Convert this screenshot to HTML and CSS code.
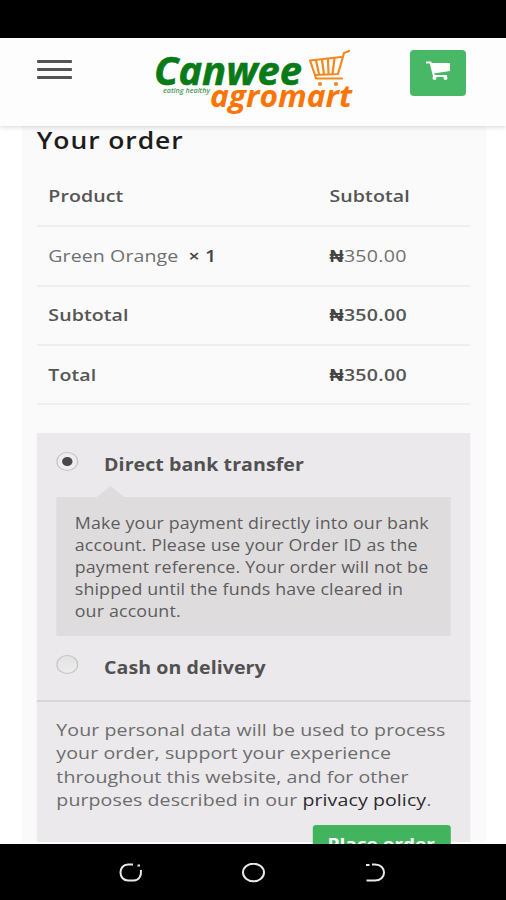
FILE: index.html
```html
<!DOCTYPE html>
<html lang="en">
<head>
    <meta charset="UTF-8">
    <meta name="viewport" content="width=device-width, initial-scale=1.0">
    <title>Checkout - Canwee agromart</title>
    <link rel="stylesheet" href="styles.css">
</head>
<body>
    <div class="status-bar"></div>

    <header class="header">
        <div class="menu">
            <span></span>
            <span></span>
            <span></span>
        </div>
        <svg class="logo" width="200" height="70" viewBox="0 0 200 70">
            <text class="logo-main" x="0" y="35" textLength="148" lengthAdjust="spacingAndGlyphs">Canwee</text>
            <text class="logo-tag" x="9" y="43" textLength="47" lengthAdjust="spacingAndGlyphs">eating healthy</text>
            <text class="logo-sub" x="56" y="56.500" textLength="142" lengthAdjust="spacingAndGlyphs">agromart</text>
            <g class="logo-cart">
                <path d="M195 1 L190 3 L184 24 L161 25 L156 10.500 L187 7" />
                <path d="M161 25 L162 28.500 H188" />
                <path d="M162 10.500 L165 24 M168 10 L170 24 M174 9 L174.500 24 M180.500 8.500 L178.500 24" />
                <circle cx="166" cy="34" r="1" />
                <circle cx="182" cy="34" r="1" />
            </g>
        </svg>
        <a class="cart-btn">
            <svg width="26" height="20" viewBox="0 0 26 20">
                <path d="M1 1.500 H5.500 L9 15 H22" />
                <path class="fill" d="M5.500 2 H25 V10 L8.500 12.500 Z" />
                <circle class="fill" cx="9.500" cy="17" r="2" />
                <circle class="fill" cx="20.500" cy="17" r="2" />
            </svg>
        </a>
    </header>

    <main class="content">
        <div class="order">
            <h3>Your order</h3>
            <table class="order-table">
                <tr>
                    <th>Product</th>
                    <th>Subtotal</th>
                </tr>
                <tr>
                    <td>Green Orange&nbsp; <b>× 1</b></td>
                    <td><b>₦</b>350.00</td>
                </tr>
                <tr>
                    <th>Subtotal</th>
                    <th><b>₦</b>350.00</th>
                </tr>
                <tr>
                    <th>Total</th>
                    <th><b>₦</b>350.00</th>
                </tr>
            </table>

            <div class="payment">
                <div class="methods">
                    <div class="method">
                        <span class="radio checked"></span>
                        <label>Direct bank transfer</label>
                    </div>
                    <div class="payment-box">
                        Make your payment directly into our bank<br>
                        account. Please use your Order ID as the<br>
                        payment reference. Your order will not be<br>
                        shipped until the funds have cleared in<br>
                        our account.
                    </div>
                    <div class="method">
                        <span class="radio"></span>
                        <label>Cash on delivery</label>
                    </div>
                </div>
                <div class="place-order">
                    <p>
                        Your personal data will be used to process<br>
                        your order, support your experience<br>
                        throughout this website, and for other<br>
                        purposes described in our <a>privacy policy</a>.
                    </p>
                    <div class="btn">Place order</div>
                </div>
            </div>
        </div>
    </main>

    <nav class="nav-bar">
        <svg width="24" height="20" viewBox="0 0 24 20">
            <path d="M14 1.500 H9 C-1 1.500 -1 17.500 9 17.500 H14.500 C20 17.500 22.500 13 22 7" />
            <path d="M18.500 2.500 H21" />
        </svg>
        <svg width="24" height="20" viewBox="0 0 24 20">
            <ellipse cx="12.500" cy="9.500" rx="10.500" ry="8.800" />
        </svg>
        <svg width="24" height="20" viewBox="0 0 24 20">
            <path d="M9 1.500 H12 C24 1.500 24 17.500 12 17.500 H3.500" />
            <path d="M3 2 H6.500" />
        </svg>
    </nav>
</body>
</html>
```
FILE: styles.css
```css
* {
    box-sizing: border-box;
}
body {
    margin: 0;
    width: 506px;
    height: 900px;
    display: flex;
    flex-direction: column;
    overflow: hidden;
    background: white;
    font-family: "Open Sans", sans-serif;
    color: #6d6d6d;
}
.status-bar {
    height: 38px;
    flex: none;
    background: black;
}
.header {
    height: 88px;
    flex: none;
    display: flex;
    align-items: flex-start;
    justify-content: space-between;
    padding: 12px 40px 0 37px;
    background: #fdfdfd;
    box-shadow: 0 1px 5px rgba(0,0,0,0.16);
    z-index: 1;
}
.menu {
    width: 35px;
    display: flex;
    flex-direction: column;
    gap: 5px;
    padding-top: 10px;
}
.menu span {
    height: 3px;
    border-radius: 1px;
    background: #555;
}
.logo {
    margin-left: 25px;
    overflow: visible;
}
.logo text {
    font-family: "Open Sans", sans-serif;
    font-style: italic;
    font-weight: bold;
}
.logo .logo-main {
    font-size: 40px;
    fill: #087a16;
    stroke: #087a16;
    stroke-width: 0.6;
}
.logo .logo-sub {
    font-size: 31px;
    fill: #fb7404;
}
.logo .logo-tag {
    font-size: 6.500px;
    font-weight: 600;
    fill: #4b9a58;
}
.logo-cart {
    fill: none;
    stroke: #f28a22;
    stroke-width: 2.2;
    stroke-linecap: round;
    stroke-linejoin: round;
}
.cart-btn {
    width: 56px;
    height: 46px;
    display: flex;
    align-items: center;
    justify-content: center;
    padding-bottom: 4px;
    border-radius: 4px;
    background: #49b866;
}
.cart-btn path {
    fill: none;
    stroke: white;
    stroke-width: 2;
}
.cart-btn .fill {
    fill: white;
    stroke: none;
}

/* wide type: the column is laid out at 440px and stretched to 506px */
.content {
    width: 440px;
    height: 718px;
    flex: none;
    padding: 0 17px 0 19px;
    overflow: hidden;
    transform: scaleX(1.15);
    transform-origin: 0 0;
}
.order {
    height: 716px;
    padding: 0 14.500px 0 13px;
    background: #fafafa;
}
.order h3 {
    margin: 0;
    height: 41px;
    font-size: 23px;
    line-height: 29px;
    font-weight: 600;
    letter-spacing: 0.8px;
    color: #1c1c1c;
}
.order-table {
    width: 100%;
    border-collapse: collapse;
    table-layout: fixed;
    font-size: 17px;
    letter-spacing: 0.08px;
    color: #707070;
}
.order-table th,
.order-table td {
    height: 59.300px;
    padding: 0 0 1px 10px;
    border-bottom: 2px solid #eeeeee;
    text-align: left;
    white-space: nowrap;
}
.order-table th:first-child,
.order-table td:first-child {
    width: 244.500px;
}
.order-table th {
    font-weight: 600;
    color: #555;
}
.order-table b {
    font-weight: 600;
    color: #444;
}
.order-table td:last-child {
    letter-spacing: 0.25px;
}
.order-table tr:not(:first-child) th:last-child {
    letter-spacing: 0.25px;
}
.payment {
    margin-top: 28px;
    height: 409px;
    background: #ebe9eb;
}
.methods {
    height: 269px;
    padding: 20px 17px 0;
    border-bottom: 2px solid #d8d6d8;
}
.method {
    display: flex;
    height: 23px;
}
.method label {
    margin-left: 22.500px;
    font-size: 17px;
    line-height: 23px;
    letter-spacing: 0.06px;
    font-weight: bold;
    color: #515151;
}
.radio {
    width: 19px;
    height: 19px;
    margin-top: -1px;
    border: 1px solid #c4c4c4;
    border-radius: 50%;
    background: linear-gradient(#e2e2e2, #ededed);
}
.radio.checked {
    background: radial-gradient(circle, #484848 0 4px, #eee 5px);
}
.payment-box {
    position: relative;
    height: 139px;
    margin: 21px 0 20px;
    padding: 15px 16px;
    background: #dfdcde;
    font-size: 15.500px;
    line-height: 22px;
    letter-spacing: 0.13px;
    color: #5c5c5c;
    white-space: nowrap;
}
.payment-box::before {
    content: "";
    position: absolute;
    left: 35px;
    top: -11px;
    border: 12px solid transparent;
    border-top: 0;
    border-bottom: 11px solid #dfdcde;
}
.place-order {
    padding: 16px 17px 0;
}
.place-order p {
    margin: 0;
    font-size: 17px;
    line-height: 23.300px;
    letter-spacing: 0.08px;
    white-space: nowrap;
}
.place-order a {
    color: #2b2b2b;
}
.btn {
    width: 120px;
    height: 44px;
    margin: 13.500px 0 0 auto;
    border-radius: 3px;
    background: #42b45e;
    color: white;
    font-size: 16.500px;
    font-weight: bold;
    line-height: 38px;
    text-align: center;
}

.nav-bar {
    height: 56px;
    flex: none;
    display: flex;
    justify-content: center;
    gap: 98px;
    padding-top: 19px;
    background: black;
    z-index: 1;
}
.nav-bar svg {
    fill: none;
    stroke: #e8e8e8;
    stroke-width: 2;
}
```
